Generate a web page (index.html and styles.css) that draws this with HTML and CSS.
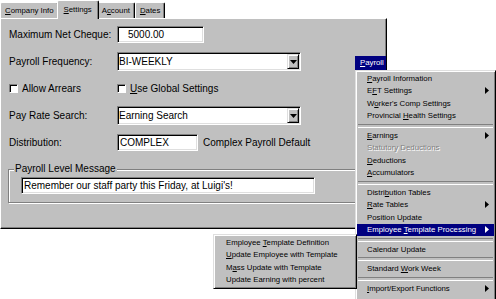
FILE: index.html
```html
<!DOCTYPE html>
<html>
<head>
<meta charset="utf-8">
<link rel="stylesheet" href="styles.css">
</head>
<body>
<div class="dialog">
  <div class="tabs">
    <div class="tab"><span><u>C</u>ompany Info</span></div>
    <div class="tab active"><span><u>S</u>ettings</span></div>
    <div class="tab"><span>A<u>c</u>count</span></div>
    <div class="tab"><span><u>D</u>ates</span></div>
  </div>
  <div class="panel">
    <div class="form">
      <div class="lbl">Maximum Net Cheque:</div>
      <div class="ctl"><div class="field num">5000.00</div></div>

      <div class="lbl">Payroll Frequency:</div>
      <div class="ctl"><div class="select"><span>BI-WEEKLY</span><span class="btn"><svg width="7" height="4" viewBox="0 0 7 4"><path d="M0 0H7L3.5 4Z" fill="#000"/></svg></span></div></div>

      <div class="check"><span class="box"></span><span>Allow Arrears</span></div>
      <div class="check"><span class="box"></span><span><u>U</u>se Global Settings</span></div>

      <div class="lbl">Pay Rate Search:</div>
      <div class="ctl"><div class="select"><span>Earning Search</span><span class="btn"><svg width="7" height="4" viewBox="0 0 7 4"><path d="M0 0H7L3.5 4Z" fill="#000"/></svg></span></div></div>

      <div class="lbl">Distribution:</div>
      <div class="ctl"><div class="field dist">COMPLEX</div><span>Complex Payroll Default</span></div>
    </div>
    <fieldset class="group">
      <legend>Payroll Level Message</legend>
      <div class="field msg">Remember our staff party this Friday, at Luigi's!</div>
    </fieldset>
  </div>
</div>

<div class="menu-title"><u>P</u>ayroll</div>

<div class="menu main">
  <div class="item"><span><u>P</u>ayroll Information</span></div>
  <div class="item"><span>E<u>F</u>T Settings</span><svg class="arr" width="4" height="7" viewBox="0 0 4 7"><path d="M0 0L4 3.5L0 7Z"/></svg></div>
  <div class="item"><span>W<u>o</u>rker's Comp Settings</span></div>
  <div class="item"><span>Provincial <u>H</u>ealth Settings</span></div>
  <div class="sep"></div>
  <div class="item"><span><u>E</u>arnings</span><svg class="arr" width="4" height="7" viewBox="0 0 4 7"><path d="M0 0L4 3.5L0 7Z"/></svg></div>
  <div class="item dis"><span>Statutory Deductions</span></div>
  <div class="item"><span><u>D</u>eductions</span></div>
  <div class="item"><span><u>A</u>ccumulators</span></div>
  <div class="sep"></div>
  <div class="item"><span>Distri<u>b</u>ution Tables</span></div>
  <div class="item"><span><u>R</u>ate Tables</span><svg class="arr" width="4" height="7" viewBox="0 0 4 7"><path d="M0 0L4 3.5L0 7Z"/></svg></div>
  <div class="item"><span>Position Update</span></div>
  <div class="item hl"><span>Employee <u>T</u>emplate Processing</span><svg class="arr" width="4" height="7" viewBox="0 0 4 7"><path d="M0 0L4 3.5L0 7Z"/></svg></div>
  <div class="sep"></div>
  <div class="item"><span>Calendar Update</span></div>
  <div class="sep"></div>
  <div class="item"><span>Standard <u>W</u>ork Week</span></div>
  <div class="sep"></div>
  <div class="item"><span><u>I</u>mport/Export Functions</span><svg class="arr" width="4" height="7" viewBox="0 0 4 7"><path d="M0 0L4 3.5L0 7Z"/></svg></div>
</div>

<div class="menu sub">
  <div class="item"><span>Employee <u>T</u>emplate Definition</span></div>
  <div class="item"><span><u>U</u>pdate Employee with Template</span></div>
  <div class="item"><span>M<u>a</u>ss Update with Template</span></div>
  <div class="item"><span>Update Earning with percent</span></div>
</div>
</body>
</html>
```

FILE: styles.css
```css
* { box-sizing: border-box; }

body {
  margin: 0;
  width: 496px;
  height: 299px;
  overflow: hidden;
  background: #fff;
  color: #000;
  font-family: "Liberation Sans", Arial, sans-serif;
  position: relative;
}

.dialog { width: 387px; }

.tabs {
  display: flex;
  align-items: flex-end;
  height: 18px;
  font-size: 7.8px;
}

.tab {
  height: 16px;
  padding: 0 4px;
  background: #c0c0c0;
  border-left: 1px solid #fff;
  border-top: 1px solid #fff;
  border-right: 1px solid #000;
  box-shadow: inset -1px 0 #808080;
  border-radius: 2px 2px 0 0;
  display: flex;
  align-items: center;
  white-space: nowrap;
  line-height: 1;
}

.tab.active {
  height: 19px;
  margin: 0 -2px -1px;
  padding: 0 6px 1px;
  position: relative;
  z-index: 1;
}

.panel {
  background: #c0c0c0;
  border-top: 1px solid #fff;
  border-left: 1px solid #fff;
  border-right: 1px solid #000;
  border-bottom: 1px solid #000;
  box-shadow: inset -1px -1px #808080;
  padding: 2px 0 25px 8px;
  font-size: 10px;
  display: flex;
  flex-direction: column;
}

.form {
  display: grid;
  grid-template-columns: 108px 1fr;
  grid-auto-rows: 27px;
  align-items: center;
}

.lbl { white-space: nowrap; }

.ctl {
  display: flex;
  align-items: center;
  gap: 5px;
  white-space: nowrap;
}

.field, .select {
  border: 1px solid;
  border-color: #808080 #fff #fff #808080;
  box-shadow: inset 1px 1px #000, inset -1px -1px #dfdfdf;
}

.field {
  height: 17px;
  background: #fff;
  padding: 0 2px;
  display: flex;
  align-items: center;
  white-space: nowrap;
}

.field.num { width: 87px; padding-left: 10px; }
.field.dist { width: 81px; }
.field.msg { width: 294px; }

.select {
  width: 184px;
  height: 19px;
  background: #fff;
  padding: 1px;
  display: flex;
  align-items: center;
  justify-content: space-between;
}

.btn {
  width: 12px;
  height: 15px;
  background: #c0c0c0;
  border: 1px solid;
  border-color: #dfdfdf #000 #000 #dfdfdf;
  box-shadow: inset 1px 1px #fff, inset -1px -1px #808080;
  display: flex;
  align-items: center;
  justify-content: center;
}

.check {
  display: flex;
  align-items: center;
  gap: 4px;
  white-space: nowrap;
}

.box {
  width: 9px;
  height: 9px;
  background: #fff;
  border: 1px solid;
  border-color: #808080 #fff #fff #808080;
  box-shadow: inset 1px 1px #000;
}

.group {
  margin: 7px 8px 0 -1px;
  padding: 2px 0 8px 12px;
  border: 1px solid #808080;
  box-shadow: inset 1px 1px #fff, 1px 1px #fff;
  min-width: 0;
}

.group legend {
  margin-left: -7px;
  padding: 0 1px;
  background: #c0c0c0;
  line-height: 12px;
}

.menu-title {
  position: absolute;
  left: 355px;
  top: 56px;
  width: 31px;
  height: 14px;
  background: #000080;
  color: #fff;
  font-size: 7.8px;
  line-height: 14px;
  padding-left: 5px;
}

.menu {
  position: absolute;
  background: #c0c0c0;
  border: 1px solid;
  border-color: #dfdfdf #000 #000 #dfdfdf;
  box-shadow: inset 1px 1px #fff, inset -1px -1px #808080;
  padding: 1px;
  font-size: 7.8px;
}

.menu.main {
  left: 355px;
  top: 70px;
  width: 141px;
  padding-bottom: 12px;
}

.menu.sub {
  left: 213px;
  top: 234px;
  width: 144px;
  padding-bottom: 2px;
  z-index: 2;
}

.item {
  height: 12.5px;
  display: flex;
  align-items: center;
  justify-content: space-between;
  padding: 0 5px 0 10px;
  white-space: nowrap;
}

.sub .item { padding-left: 11px; }

.item.hl { background: #000080; color: #fff; }
.item.dis { color: #808080; text-shadow: 1px 1px 0 #fff; }

.arr { fill: currentColor; flex: none; }

.sep {
  height: 7px;
  display: flex;
  align-items: center;
  padding: 0 1px;
}

.sep::before {
  content: "";
  flex: 1;
  height: 2px;
  border-top: 1px solid #808080;
  border-bottom: 1px solid #fff;
}
```
